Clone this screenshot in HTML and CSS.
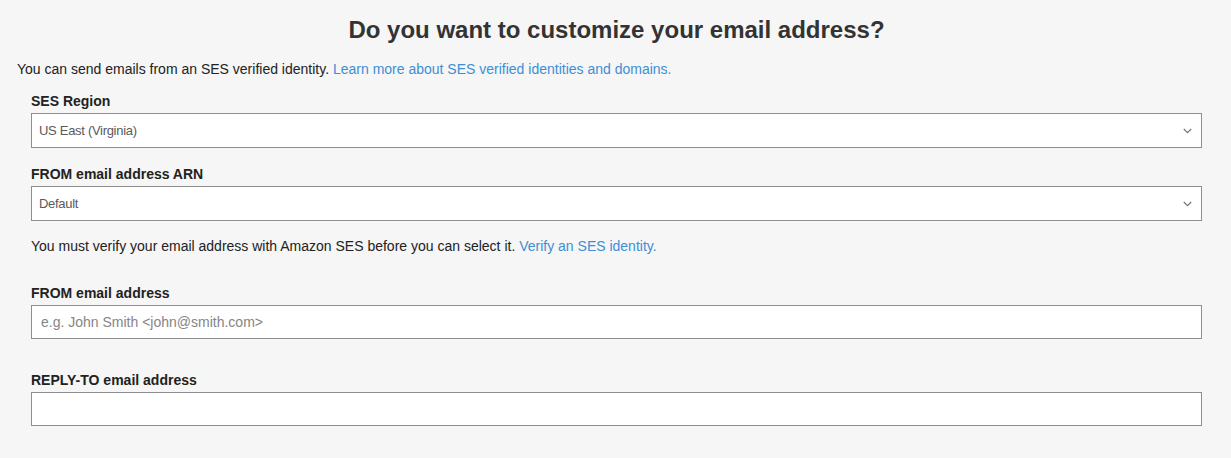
FILE: index.html
```html
<!DOCTYPE html>
<html>
<head>
<meta charset="utf-8">
<link rel="stylesheet" href="styles.css">
</head>
<body>
<h1 class="title">Do you want to customize your email address?</h1>
<div class="page">
  <p class="intro">You can send emails from an SES verified identity. <a class="link" href="#">Learn more about SES verified identities and domains.</a></p>
  <div class="form">
    <div class="field">
      <label class="label">SES Region</label>
      <div class="select"><span class="select-text">US East (Virginia)</span>
        <svg class="chev" width="9" height="6" viewBox="0 0 9 6"><path d="M0.8 1 L4.5 4.6 L8.2 1" fill="none" stroke="#777" stroke-width="1.2"/></svg>
      </div>
    </div>
    <div class="field">
      <label class="label">FROM email address ARN</label>
      <div class="select"><span class="select-text">Default</span>
        <svg class="chev" width="9" height="6" viewBox="0 0 9 6"><path d="M0.8 1 L4.5 4.6 L8.2 1" fill="none" stroke="#777" stroke-width="1.2"/></svg>
      </div>
    </div>
    <p class="help">You must verify your email address with Amazon SES before you can select it. <a class="link" href="#">Verify an SES identity.</a></p>
    <div class="field field-gap">
      <label class="label">FROM email address</label>
      <input class="input" type="text" placeholder="e.g. John Smith <john@smith.com>">
    </div>
    <div class="field field-gap2">
      <label class="label">REPLY-TO email address</label>
      <input class="input" type="text">
    </div>
  </div>
</div>
</body>
</html>
```
FILE: styles.css
```css
html, body {
  margin: 0;
  padding: 0;
  background: #f5f6f5;
}
body {
  font-family: "Liberation Sans", Arial, sans-serif;
  color: #222;
  width: 1231px;
  height: 458px;
  overflow: hidden;
}
.page {
  padding: 0 29px 0 17px;
}
.title {
  margin: 0;
  padding: 15px 0 0 2px;
  font-size: 24px;
  line-height: 30px;
  font-weight: bold;
  color: #333;
  text-align: center;
}
.intro {
  margin: 16px 0 0 0;
  font-size: 14px;
  line-height: 16px;
  color: #222;
}
.link {
  color: #3e8ed6;
  text-decoration: none;
}
.form {
  padding-left: 14px;
  margin-top: 16px;
}
.field {
  display: flex;
  flex-direction: column;
}
.field + .field {
  margin-top: 18px;
}
.label {
  font-size: 14px;
  line-height: 16px;
  font-weight: bold;
  color: #222;
  margin-bottom: 4px;
}
.select {
  box-sizing: border-box;
  height: 35px;
  border: 1px solid #8e8e8e;
  background: #fff;
  display: flex;
  align-items: center;
  justify-content: space-between;
  padding: 0 7px 0 7px;
}
.select-text {
  font-size: 13px;
  color: #5a5a5a;
  letter-spacing: -0.3px;
  font-weight: normal;
}
.chev {
  display: block;
  margin-right: 2px;
}
.help {
  margin: 17px 0 0 0;
  font-size: 14px;
  line-height: 16px;
  color: #222;
}
.field.field-gap {
  margin-top: 31px;
}
.field.field-gap2 {
  margin-top: 33px;
}
.input {
  box-sizing: border-box;
  height: 34px;
  width: 100%;
  margin: 0;
  border: 1px solid #8e8e8e;
  border-radius: 0;
  background: #fff;
  font-family: "Liberation Sans", Arial, sans-serif;
  font-size: 14px;
  padding: 0 9px;
  outline: none;
}
.input::placeholder {
  color: #858585;
}
```
